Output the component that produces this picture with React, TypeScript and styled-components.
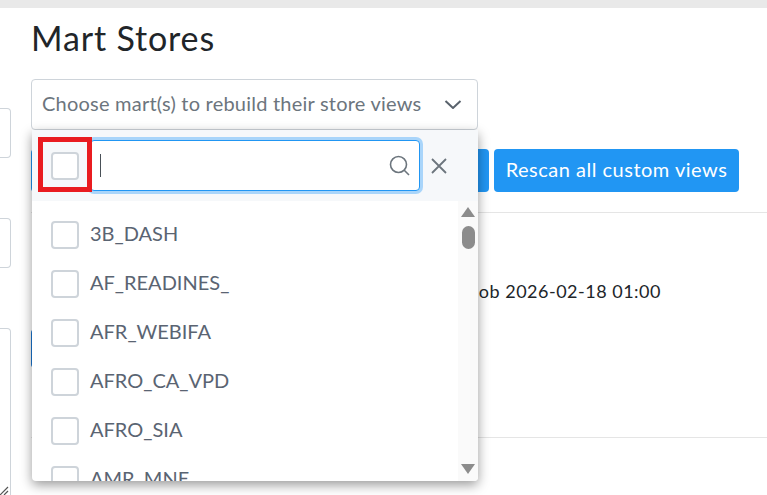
import React from "react";
import styled, { createGlobalStyle } from "styled-components";

const marts = ["3B_DASH", "AF_READINES_", "AFR_WEBIFA", "AFRO_CA_VPD", "AFRO_SIA", "AMR_MNE"];

export default function App() {
  return (
    <Page>
      <GlobalStyle />
      <TopBar />
      <Columns>
        <Sidebar>
          <SideInput />
          <SideInput />
          <SideTextarea>
            <ResizeGrip width="10" height="10" viewBox="0 0 10 10">
              <path d="M1 10 L9 2 M5 10 L9 6" stroke="#555" strokeWidth="1.2" fill="none" />
            </ResizeGrip>
          </SideTextarea>
        </Sidebar>
        <Main>
          <Title>Mart Stores</Title>
          <SelectWrapper>
            <SelectBox>
              <Placeholder>Choose mart(s) to rebuild their store views</Placeholder>
              <svg width="18" height="9" viewBox="0 0 18 9">
                <path d="M1.5 1 L9 8 L16.5 1" stroke="#59626c" strokeWidth="2" fill="none" />
              </svg>
            </SelectBox>
            <Dropdown>
              <DropdownHeader>
                <Checkbox />
                <SearchBox>
                  <Caret />
                  <svg width="21" height="21" viewBox="0 0 21 21">
                    <circle cx="9.5" cy="9.5" r="8" stroke="#6c757d" strokeWidth="1.6" fill="none" />
                    <path d="M15 15 L20 20" stroke="#6c757d" strokeWidth="1.6" />
                  </svg>
                </SearchBox>
                <svg width="16" height="16" viewBox="0 0 16 16">
                  <path d="M1 1 L15 15 M15 1 L1 15" stroke="#6c757d" strokeWidth="1.8" />
                </svg>
              </DropdownHeader>
              <DropdownBody>
                <MartList>
                  {marts.map(mart => (
                    <MartRow key={mart}>
                      <Checkbox />
                      <span>{mart}</span>
                    </MartRow>
                  ))}
                </MartList>
                <ScrollTrack>
                  <svg width="14" height="10" viewBox="0 0 14 10">
                    <path d="M7 0 L14 10 L0 10 Z" fill="#8c8c8c" />
                  </svg>
                  <ScrollThumb />
                  <ScrollSpacer />
                  <svg width="14" height="10" viewBox="0 0 14 10">
                    <path d="M0 0 L14 0 L7 10 Z" fill="#8c8c8c" />
                  </svg>
                </ScrollTrack>
              </DropdownBody>
              <RedMark />
            </Dropdown>
          </SelectWrapper>
          <ButtonRow>
            <Button $width={458} />
            <Button $width={245}>Rescan all custom views</Button>
          </ButtonRow>
          <Divider />
          <JobSection>
            <JobText>job 2026-02-18 01:00</JobText>
            <DarkButton $width={200} />
          </JobSection>
          <Divider />
        </Main>
      </Columns>
    </Page>
  );
}

const GlobalStyle = createGlobalStyle`
  html, body {
    margin: 0;
    padding: 0;
    background: #fff;
    overflow: hidden;
  }
`;
const Page = styled.div`
  width: 767px;
  height: 495px;
  overflow: hidden;
  font-family: Lato, "Liberation Sans", sans-serif;
  color: #212529;
`;
const TopBar = styled.div`
  height: 8px;
  background: #e9e9e9;
`;
const Columns = styled.div`
  display: flex;
  gap: 20px;
  height: 487px;
`;
const Sidebar = styled.div`
  width: 11px;
  flex: none;
  padding-top: 100px;
  display: flex;
  flex-direction: column;
  gap: 60px;
`;
const SideInput = styled.div`
  height: 51px;
  box-sizing: border-box;
  border: 1px solid #ced4da;
  border-left: none;
  border-radius: 0 4px 4px 0;
`;
const SideTextarea = styled(SideInput)`
  position: relative;
  height: 170px;
  margin-bottom: -3px;
  flex: none;
`;
const ResizeGrip = styled.svg`
  position: absolute;
  left: -1px;
  top: 156px;
`;
const Main = styled.div`
  flex: 1;
  min-width: 0;
`;
const Title = styled.h1`
  margin: 9px 0 20px;
  font-size: 34px;
  line-height: 42px;
  font-weight: 400;
  letter-spacing: 0.85px;
`;
const SelectWrapper = styled.div`
  position: relative;
  width: 447px;
`;
const SelectBox = styled.div`
  height: 51px;
  box-sizing: border-box;
  border: 1px solid #ced4da;
  border-radius: 4px;
  padding: 0 15px 0 10px;
  display: flex;
  align-items: center;
  justify-content: space-between;
`;
const Placeholder = styled.span`
  font-size: 20px;
  line-height: 26px;
  margin-bottom: 3px;
  letter-spacing: 0.22px;
  color: #6c757d;
`;
const Dropdown = styled.div`
  position: absolute;
  z-index: 2;
  top: 51px;
  left: 1px;
  right: 0;
  height: 351px;
  background: #fff;
  border-radius: 0 0 4px 4px;
  overflow: hidden;
  box-shadow: 0 4px 12px rgba(0, 0, 0, 0.4);
`;
const DropdownHeader = styled.div`
  height: 71px;
  background: #f6f8fa;
  display: flex;
  align-items: center;
  padding: 0 31px 0 19px;
  box-sizing: border-box;
  gap: 11px;
`;
const Checkbox = styled.div`
  width: 28px;
  height: 28px;
  flex: none;
  box-sizing: border-box;
  background: #fff;
  border: 2px solid #ced4da;
  border-radius: 4px;
`;
const SearchBox = styled.div`
  flex: 1;
  height: 51px;
  box-sizing: border-box;
  background: #fff;
  border: 1px solid #2196f3;
  border-radius: 4px;
  box-shadow: 0 0 0 3px #a9d5fa;
  display: flex;
  align-items: center;
  justify-content: space-between;
  padding: 0 9px;
`;
const Caret = styled.div`
  width: 1px;
  height: 23px;
  background: #495057;
`;
const DropdownBody = styled.div`
  display: flex;
  height: 280px;
`;
const MartList = styled.div`
  flex: 1;
  overflow: hidden;
  padding: 20px 0 0 19px;
`;
const MartRow = styled.div`
  height: 49px;
  display: flex;
  align-items: flex-start;
  gap: 11px;
  font-size: 20px;
  line-height: 24px;
  color: #5a6472;
`;
const ScrollTrack = styled.div`
  width: 20px;
  flex: none;
  background: #fafafa;
  display: flex;
  flex-direction: column;
  align-items: center;
  padding: 6px 0 7px;
  box-sizing: border-box;
`;
const ScrollThumb = styled.div`
  width: 13px;
  height: 23px;
  margin-top: 9px;
  border-radius: 7px;
  background: #8c8c8c;
`;
const ScrollSpacer = styled.div`
  flex: 1;
`;
const RedMark = styled.div`
  position: absolute;
  top: 7px;
  left: 6px;
  width: 54px;
  height: 55px;
  box-sizing: border-box;
  border: 5px solid #e91c20;
`;
const ButtonRow = styled.div`
  display: flex;
  gap: 5px;
  margin-top: 19px;
`;
const Button = styled.button<{ $width: number }>`
  width: ${props => props.$width}px;
  flex: none;
  height: 43px;
  padding: 0 6px 3px;
  border: none;
  border-radius: 4px;
  background: #2196f3;
  color: #fff;
  font-family: inherit;
  font-size: 20px;
  letter-spacing: 0.5px;
  white-space: nowrap;
`;
const Divider = styled.div`
  height: 1px;
  margin-top: 20px;
  background: #e5e5e5;
`;
const JobSection = styled.div`
  height: 204px;
  padding-top: 66px;
  box-sizing: border-box;
`;
const JobText = styled.div`
  font-size: 18px;
  line-height: 24px;
  letter-spacing: 0.5px;
  padding-left: 443px;
`;
const DarkButton = styled(Button)`
  display: block;
  height: 39px;
  margin-top: 26px;
  background: #1976d2;
`;
